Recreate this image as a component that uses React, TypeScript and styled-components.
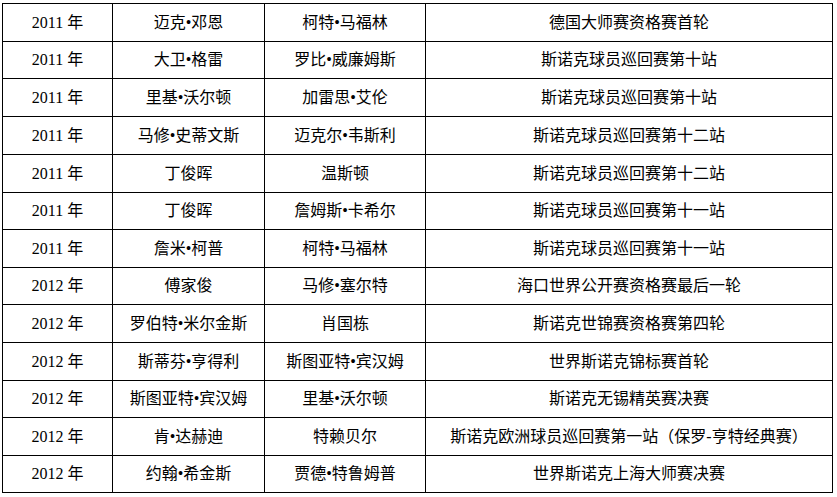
import React from 'react';
import styled, { createGlobalStyle } from 'styled-components';

const GlobalStyle = createGlobalStyle`
  html, body {
    margin: 0;
    padding: 0;
    background: #ffffff;
  }
  body {
    padding: 3px 0 0 2px;
    font-family: "Liberation Serif", "Noto Sans CJK SC", serif;
  }
`;

const Grid = styled.div`
  display: grid;
  grid-template-columns: 109px 151px 160px 406px;
  gap: 1px;
  padding: 1px;
  width: max-content;
  background: #000000;
`;

const Cell = styled.div`
  background: #ffffff;
  display: flex;
  align-items: center;
  justify-content: center;
  font-size: 16px;
  line-height: 20px;
  color: #000000;
  white-space: nowrap;
`;

type Row = { year: string; winner: string; loser: string; event: string };

const rows: Row[] = [
  { year: '2011 年', winner: '迈克•邓恩', loser: '柯特•马福林', event: '德国大师赛资格赛首轮' },
  { year: '2011 年', winner: '大卫•格雷', loser: '罗比•威廉姆斯', event: '斯诺克球员巡回赛第十站' },
  { year: '2011 年', winner: '里基•沃尔顿', loser: '加雷思•艾伦', event: '斯诺克球员巡回赛第十站' },
  { year: '2011 年', winner: '马修•史蒂文斯', loser: '迈克尔•韦斯利', event: '斯诺克球员巡回赛第十二站' },
  { year: '2011 年', winner: '丁俊晖', loser: '温斯顿', event: '斯诺克球员巡回赛第十二站' },
  { year: '2011 年', winner: '丁俊晖', loser: '詹姆斯•卡希尔', event: '斯诺克球员巡回赛第十一站' },
  { year: '2011 年', winner: '詹米•柯普', loser: '柯特•马福林', event: '斯诺克球员巡回赛第十一站' },
  { year: '2012 年', winner: '傅家俊', loser: '马修•塞尔特', event: '海口世界公开赛资格赛最后一轮' },
  { year: '2012 年', winner: '罗伯特•米尔金斯', loser: '肖国栋', event: '斯诺克世锦赛资格赛第四轮' },
  { year: '2012 年', winner: '斯蒂芬•亨得利', loser: '斯图亚特•宾汉姆', event: '世界斯诺克锦标赛首轮' },
  { year: '2012 年', winner: '斯图亚特•宾汉姆', loser: '里基•沃尔顿', event: '斯诺克无锡精英赛决赛' },
  { year: '2012 年', winner: '肯•达赫迪', loser: '特赖贝尔', event: '斯诺克欧洲球员巡回赛第一站（保罗-亨特经典赛）' },
  { year: '2012 年', winner: '约翰•希金斯', loser: '贾德•特鲁姆普', event: '世界斯诺克上海大师赛决赛' },
];

// row pitch in the source alternates between 38 and 37 px
const pitch = [38, 37, 38, 38, 38, 37, 38, 37, 38, 38, 37, 38, 37];

export default function App() {
  return (
    <>
      <GlobalStyle />
      <Grid style={{ gridTemplateRows: pitch.map((h) => `${h - 1}px`).join(' ') }}>
        {rows.map((r, i) => (
          <React.Fragment key={i}>
            <Cell>{r.year}</Cell>
            <Cell>{r.winner}</Cell>
            <Cell>{r.loser}</Cell>
            <Cell>{r.event}</Cell>
          </React.Fragment>
        ))}
      </Grid>
    </>
  );
}
